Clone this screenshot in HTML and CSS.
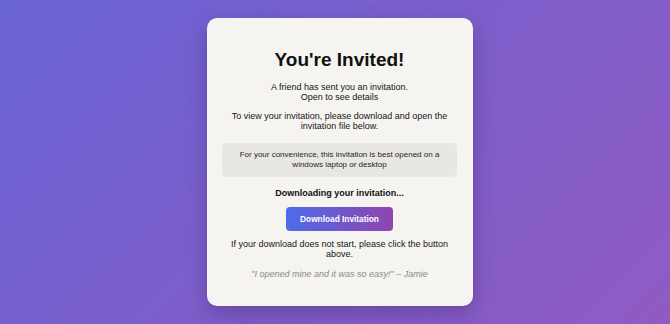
FILE: index.html
```html
<!DOCTYPE html>
<html lang="en">

<head>
    <meta charset="UTF-8">
    <meta name="viewport" content="width=device-width, initial-scale=1.0">
    <title>You're Invited!</title>
    <link rel="stylesheet" href="styles.css">
</head>

<body>
    <div class="cartao">
        <h1 class="titulo">You're Invited!</h1>
        <p class="texto">A friend has sent you an invitation.<br>Open to see details</p>
        <p class="texto">To view your invitation, please download and open the invitation file below.</p>
        <div class="aviso">For your convenience, this invitation is best opened on a windows laptop or desktop</div>
        <p class="status">Downloading your invitation...</p>
        <a class="btn" href="#">Download Invitation</a>
        <p class="texto">If your download does not start, please click the button above.</p>
        <p class="citacao">"I opened mine and it was so easy!" – Jamie</p>
    </div>
</body>

</html>
```

FILE: styles.css
```css
* {
    margin: 0;
    padding: 0;
    box-sizing: border-box;
}

html,
body {
    height: 100%;
}

body {
    font-family: "Liberation Sans", Arial, sans-serif;
    background: linear-gradient(135deg, #6a64d5 0%, #7d5fcb 50%, #905bc3 100%);
    padding: 18px 0 0 10px;
    color: #1b1b1b;
}

.cartao {
    width: 266px;
    height: 288px;
    margin: 0 auto;
    padding: 31px 16px 0 15px;
    background-color: #f5f4f0;
    border-radius: 10px;
    box-shadow: 0 8px 22px rgba(40, 20, 80, 0.3);
    text-align: center;
    display: flex;
    flex-direction: column;
    align-items: center;
}

.titulo {
    font-size: 19px;
    line-height: 22px;
    font-weight: bold;
    color: #111;
    margin-bottom: 12px;
}

.texto {
    font-size: 9px;
    line-height: 9.5px;
    margin-bottom: 10px;
    color: #151515;
}

.aviso {
    align-self: stretch;
    background-color: #e8e7e2;
    border-radius: 5px;
    font-size: 8px;
    line-height: 10px;
    padding: 7px 16px;
    margin: 2px 0 11px 0;
    color: #1e1e1e;
}

.status {
    font-size: 9px;
    line-height: 10px;
    font-weight: bold;
    margin-bottom: 9px;
    color: #111;
}

.btn {
    display: block;
    height: 24px;
    line-height: 24px;
    padding: 0 14px;
    border-radius: 4px;
    background: linear-gradient(90deg, #4e6bea 0%, #8f45ad 100%);
    color: white;
    font-size: 8.3px;
    font-weight: bold;
    text-decoration: none;
    margin-bottom: 9px;
}

.citacao {
    font-size: 9px;
    line-height: 10px;
    font-style: italic;
    color: #8a8a8a;
}
```
